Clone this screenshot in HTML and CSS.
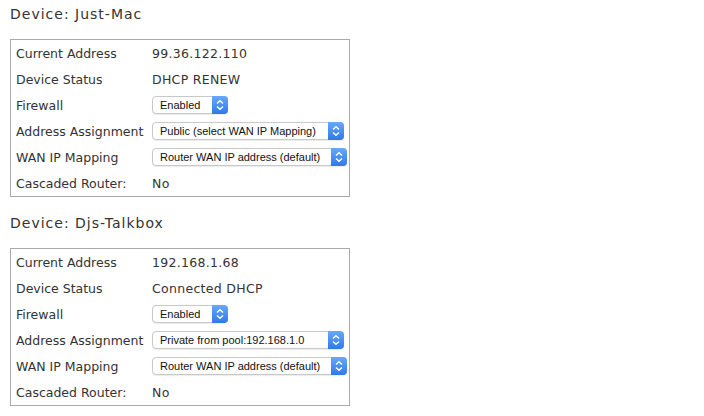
FILE: index.html
```html
<!DOCTYPE html>
<html lang="en">
<head>
    <meta charset="UTF-8">
    <meta name="viewport" content="width=device-width, initial-scale=1.0">
    <title>Devices</title>
    <link rel="stylesheet" href="styles.css">
</head>
<body>
    <div class="device">
        <h2>Device: Just-Mac</h2>
        <div class="device-box">
            <div class="row">
                <span class="label">Current Address</span>
                <span class="value">99.36.122.110</span>
            </div>
            <div class="row">
                <span class="label">Device Status</span>
                <span class="value">DHCP RENEW</span>
            </div>
            <div class="row">
                <span class="label">Firewall</span>
                <span class="select select-small">
                    <span class="select-text">Enabled</span>
                    <span class="select-btn"><svg viewBox="0 0 16 16" width="16" height="16"><path d="M5 6.5 8 3.8 11 6.5M5 9.5 8 12.2 11 9.5" fill="none" stroke="#fff" stroke-width="1.4"/></svg></span>
                </span>
            </div>
            <div class="row">
                <span class="label">Address Assignment</span>
                <span class="select select-mid">
                    <span class="select-text">Public (select WAN IP Mapping)</span>
                    <span class="select-btn"><svg viewBox="0 0 16 16" width="16" height="16"><path d="M5 6.5 8 3.8 11 6.5M5 9.5 8 12.2 11 9.5" fill="none" stroke="#fff" stroke-width="1.4"/></svg></span>
                </span>
            </div>
            <div class="row">
                <span class="label">WAN IP Mapping</span>
                <span class="select select-wide">
                    <span class="select-text">Router WAN IP address (default)</span>
                    <span class="select-btn"><svg viewBox="0 0 16 16" width="16" height="16"><path d="M5 6.5 8 3.8 11 6.5M5 9.5 8 12.2 11 9.5" fill="none" stroke="#fff" stroke-width="1.4"/></svg></span>
                </span>
            </div>
            <div class="row">
                <span class="label">Cascaded Router:</span>
                <span class="value">No</span>
            </div>
        </div>
    </div>

    <div class="device">
        <h2>Device: Djs-Talkbox</h2>
        <div class="device-box">
            <div class="row">
                <span class="label">Current Address</span>
                <span class="value">192.168.1.68</span>
            </div>
            <div class="row">
                <span class="label">Device Status</span>
                <span class="value">Connected DHCP</span>
            </div>
            <div class="row">
                <span class="label">Firewall</span>
                <span class="select select-small">
                    <span class="select-text">Enabled</span>
                    <span class="select-btn"><svg viewBox="0 0 16 16" width="16" height="16"><path d="M5 6.5 8 3.8 11 6.5M5 9.5 8 12.2 11 9.5" fill="none" stroke="#fff" stroke-width="1.4"/></svg></span>
                </span>
            </div>
            <div class="row">
                <span class="label">Address Assignment</span>
                <span class="select select-mid">
                    <span class="select-text">Private from pool:192.168.1.0</span>
                    <span class="select-btn"><svg viewBox="0 0 16 16" width="16" height="16"><path d="M5 6.5 8 3.8 11 6.5M5 9.5 8 12.2 11 9.5" fill="none" stroke="#fff" stroke-width="1.4"/></svg></span>
                </span>
            </div>
            <div class="row">
                <span class="label">WAN IP Mapping</span>
                <span class="select select-wide">
                    <span class="select-text">Router WAN IP address (default)</span>
                    <span class="select-btn"><svg viewBox="0 0 16 16" width="16" height="16"><path d="M5 6.5 8 3.8 11 6.5M5 9.5 8 12.2 11 9.5" fill="none" stroke="#fff" stroke-width="1.4"/></svg></span>
                </span>
            </div>
            <div class="row">
                <span class="label">Cascaded Router:</span>
                <span class="value">No</span>
            </div>
        </div>
    </div>
</body>
</html>
```

FILE: styles.css
```css
body {
    font-family: "DejaVu Sans", sans-serif;
    font-size: 12.5px;
    color: #333;
    background-color: #fff;
    margin: 0;
    padding: 0 10px;
}

.device {
    width: 340px;
    margin-bottom: 12px;
}

h2 {
    font-size: 14px;
    font-weight: normal;
    letter-spacing: 1px;
    color: #333;
    line-height: 28px;
    margin: 0 0 11px 0;
}

.device-box {
    border: 1px solid #aaa;
}

.row {
    display: flex;
    align-items: center;
    height: 26px;
    padding-left: 5px;
}

.label {
    width: 136px;
}

.value {
    letter-spacing: 0.3px;
}

.select {
    display: flex;
    align-items: stretch;
    height: 16px;
    border: 1px solid #c8c8c8;
    border-radius: 4px;
    background: #fff;
    font-family: "Liberation Sans", Arial, sans-serif;
    font-size: 11px;
    color: #111;
    box-shadow: 0 1px 1px rgba(0, 0, 0, 0.08);
}

.select-small {
    width: 74px;
}

.select-mid {
    width: 190px;
}

.select-wide {
    width: 193px;
}

.select-text {
    flex: 1;
    padding-left: 7px;
    line-height: 16px;
    white-space: nowrap;
    overflow: hidden;
}

.select-btn {
    width: 16px;
    background: linear-gradient(#69a8fb, #2d7ae8);
    border-radius: 0 4px 4px 0;
    margin: -1px -1px -1px 0;
    display: flex;
    align-items: center;
    justify-content: center;
}
```
